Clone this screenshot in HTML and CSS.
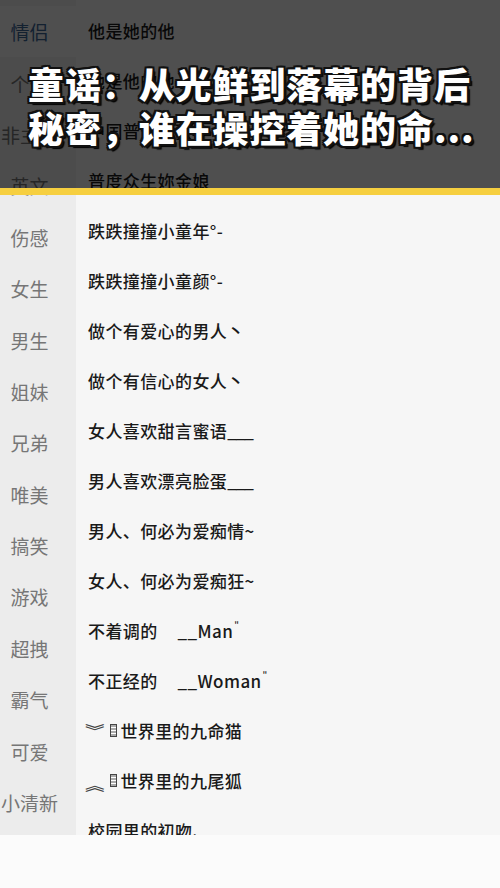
FILE: index.html
```html
<!DOCTYPE html>
<html lang="zh">
<head>
<meta charset="utf-8">
<link rel="stylesheet" href="styles.css">
</head>
<body>
<div class="screen">
  <div class="main">
    <div class="side">
      <div class="cat active">情侣</div>
      <div class="cat">个性</div>
      <div class="cat">非主流</div>
      <div class="cat">英文</div>
      <div class="cat">伤感</div>
      <div class="cat">女生</div>
      <div class="cat">男生</div>
      <div class="cat">姐妹</div>
      <div class="cat">兄弟</div>
      <div class="cat">唯美</div>
      <div class="cat">搞笑</div>
      <div class="cat">游戏</div>
      <div class="cat">超拽</div>
      <div class="cat">霸气</div>
      <div class="cat">可爱</div>
      <div class="cat">小清新</div>
    </div>
    <div class="list">
      <div class="row">他是她的他</div>
      <div class="row">她是他的她</div>
      <div class="row">中国普通男孩</div>
      <div class="row">普度众生妳金娘</div>
      <div class="row">跌跌撞撞小童年°-</div>
      <div class="row">跌跌撞撞小童颜°-</div>
      <div class="row">做个有爱心的男人丶</div>
      <div class="row">做个有信心的女人丶</div>
      <div class="row">女人喜欢甜言蜜语<span class="ul">___</span></div>
      <div class="row">男人喜欢漂亮脸蛋<span class="ul">___</span></div>
      <div class="row">男人、何必为爱痴情~</div>
      <div class="row">女人、何必为爱痴狂~</div>
      <div class="row">不着调的<span class="gap"></span>__Man<sup class="tick">"</sup></div>
      <div class="row">不正经的<span class="gap"></span>__Woman<sup class="tick">"</sup></div>
      <div class="row"><span class="chev">︾</span><span class="tofu"></span>世界里的九命猫</div>
      <div class="row"><span class="chev up">︽</span><span class="tofu"></span>世界里的九尾狐</div>
      <div class="row">校园里的初吻、</div>
    </div>
  </div>
  <div class="foot"></div>
  <div class="banner">
    <div class="title">童谣：从光鲜到落幕的背后<br>秘密，谁在操控着她的命...</div>
  </div>
</div>
</body>
</html>
```
FILE: styles.css
```css
html, body {
  margin: 0;
  padding: 0;
}
body {
  width: 500px;
  height: 888px;
  overflow: hidden;
  background: #fbfbfb;
  font-family: "Noto Sans CJK SC", "Noto Sans", sans-serif;
}
.screen {
  position: relative;
  width: 500px;
  height: 888px;
}
.main {
  display: flex;
  height: 835px;
  overflow: hidden;
  background: #f6f6f6;
}
.side {
  width: 76px;
  flex: none;
  background: #ececec;
  padding-top: 6px;
}
.cat {
  height: 51.4px;
  display: flex;
  align-items: center;
  justify-content: center;
  padding-right: 17px;
  font-size: 19px;
  color: #767676;
  white-space: nowrap;
}
.cat.active {
  background: #f6f6f6;
  color: #3d6796;
}
.list {
  flex: 1;
  padding-top: 5px;
  padding-left: 12px;
}
.row {
  height: 50px;
  display: flex;
  align-items: center;
  font-size: 17px;
  letter-spacing: 0.4px;
  font-weight: 500;
  color: #1a1a1a;
  white-space: nowrap;
}
.ul {
  letter-spacing: -1px;
}
.gap {
  display: inline-block;
  width: 20px;
}
.tick {
  font-size: 9px;
  align-self: flex-start;
  margin-top: 14px;
  margin-left: 1px;
}
.chev {
  font-size: 14px;
  color: #444;
  margin-right: 8px;
  transform: scaleX(1.4);
  display: inline-block;
}
.chev.up {
  margin-top: 8px;
}
.tofu {
  display: inline-block;
  width: 7px;
  height: 13px;
  border: 1px solid #444;
  margin-right: 3px;
  box-sizing: border-box;
  background: repeating-linear-gradient(#aaa 0 2px, #fff 2px 3px);
}
.foot {
  height: 53px;
  background: #fbfbfb;
}
.banner {
  position: absolute;
  left: 0;
  top: 0;
  width: 500px;
  height: 188px;
  background: rgba(0, 0, 0, 0.68);
  border-bottom: 7px solid #f6cf40;
  box-sizing: content-box;
}
.title {
  padding: 61px 0 0 28px;
  font-size: 36px;
  line-height: 44px;
  font-weight: 900;
  color: #ffffff;
  letter-spacing: 0.9px;
  white-space: nowrap;
  text-shadow:
    2px 0 0 #111, -2px 0 0 #111, 0 2px 0 #111, 0 -2px 0 #111,
    2px 2px 0 #111, -2px -2px 0 #111, 2px -2px 0 #111, -2px 2px 0 #111,
    3px 3px 1px #000;
}
```
